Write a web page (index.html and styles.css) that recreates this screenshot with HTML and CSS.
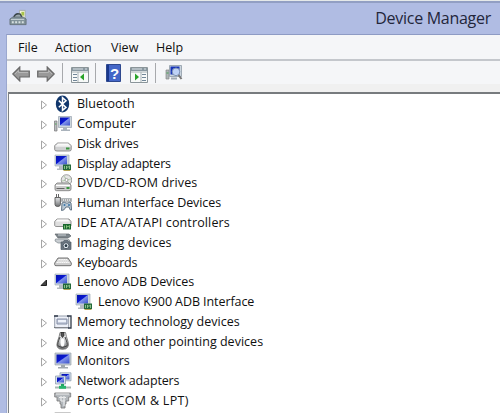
FILE: index.html
```html
<!DOCTYPE html>
<html lang="en">
<head>
<meta charset="utf-8">
<title>Device Manager</title>
<link rel="stylesheet" href="styles.css">
</head>
<body>
<svg class="defs" aria-hidden="true">
<defs>
<linearGradient id="metal" x2="0" y2="1"><stop stop-color="#fff"/><stop offset=".5" stop-color="#c5c7c9"/><stop offset="1" stop-color="#6c6e70"/></linearGradient>
<linearGradient id="screen" x2="1" y2="1"><stop stop-color="#0713ae"/><stop offset=".45" stop-color="#0918d1"/><stop offset=".52" stop-color="#8193ea"/><stop offset="1" stop-color="#3a50c9"/></linearGradient>
<symbol id="right" viewBox="0 0 8 10"><path d="M1.5 1v8L6.500 5z" fill="#fff" stroke="#a5a5a5"/></symbol>
<symbol id="open" viewBox="0 0 8 10"><path d="M6.500 2v5.500H1z" fill="#444" stroke="#222"/></symbol>
<symbol id="monitor" viewBox="0 0 18 18"><path d="M1 1h16v12H1z" fill="#c5ced5" stroke="#9ba5ad" stroke-width=".7"/><path d="M2.500 2.500h13v9h-13z" fill="url(#screen)"/><path d="M7 13h4v2h3v1.500H4V15h3z" fill="#a0a8ad"/></symbol>
<symbol id="adapter" viewBox="0 0 18 18"><path d="M1 1h14v11H1z" fill="#ccd6dd" stroke="#a0acb5" stroke-width=".7"/><path d="M2 2h11v8.500H2z" fill="url(#screen)"/><path d="M5 12h4v4H3v-1.500h2z" fill="#b4bbc0"/><path d="M9 10.500h8V16H9z" fill="#22683a"/><path d="M10.500 12v3M12.500 15v-3l1.200 1.500L15.500 12v3" stroke="#a5d69a" fill="none" stroke-width=".8"/><path d="M9.500 16.500h7" stroke="#b5a555"/></symbol>
<symbol id="bluetooth" viewBox="0 0 18 18"><ellipse cx="8.500" cy="9" rx="6.700" ry="8.500" fill="#10366c"/><path d="M4.800 5.600l7.200 6.800-3.500 3V2.700L12 5.800l-7.200 6.500" fill="none" stroke="#fff" stroke-width="1.500"/></symbol>
<symbol id="computer" viewBox="0 0 18 18"><path d="M.5 6h2.500v10H.5z" fill="#b9bcc0" stroke="#777" stroke-width=".7"/><path d="M1 9h1.500" stroke="#54a657"/><path d="M4.500 1.500h13v11h-13z" fill="#ccd6dd" stroke="#9aa4af" stroke-width=".7"/><path d="M6 2.500h10v8H6z" fill="url(#screen)"/><path d="M9 12.500h4v2h3V16H7v-1.500h2z" fill="#aab3bc"/></symbol>
<symbol id="disk" viewBox="0 0 18 18"><path d="M.7 11.500L3.700 9h10.500l3 2.500v4q0 1.500-2 1.500H3q-2.300 0-2.300-1.500z" fill="#d0d1d2" stroke="#777" stroke-width=".8"/><path d="M4 9.500h10l2 2H2z" fill="#fafafa"/><path d="M1.500 12h15" stroke="#fff"/><path d="M12 14.500h3.500" stroke="#39943e" stroke-width="2"/></symbol>
<symbol id="dvd" viewBox="0 0 18 18"><circle cx="12.500" cy="6" r="5.300" fill="#e5e5e5" stroke="#888" stroke-width=".8"/><path d="M10 2l2.500 4 3 4M8 7l9-2" stroke="#b1cda9" stroke-width=".9"/><circle cx="12.500" cy="6" r="1.500" fill="#fff" stroke="#777" stroke-width=".6"/><path d="M1 11l2-2h12l2 2v4q0 1.700-2 1.700H2.500Q1 16.700 1 15z" fill="#ccc" stroke="#777" stroke-width=".8"/><path d="M2 11.500h14" stroke="#fff"/><path d="M2.500 14.500h8" stroke="#666"/><path d="M12.500 14h3" stroke="#39943e" stroke-width="2"/></symbol>
<symbol id="hid" viewBox="0 0 18 18"><path d="M2.500 0v3m2-3v3M1 3.500h5.400v7q0 2-2.700 2T1 10.500z" fill="url(#metal)" stroke="#555" stroke-width=".9"/><path d="M7.500 4.500h10v3h-10z" fill="#d8dcde" stroke="#9ba1a5" stroke-width=".7"/><path d="M8 6h9" stroke="#777" stroke-dasharray="1 1"/><path d="M8 9l2-1 2 1h2l2-1 1 1 .6 7q-1.800 1-2.600-3h-3q-2 4-4.500 3.500z" fill="#b8c7d3" stroke="#566a7c" stroke-width=".9"/><circle cx="10.500" cy="11" r="1" fill="#3c78aa"/><circle cx="15" cy="11" r="1" fill="#3c78aa"/></symbol>
<symbol id="ide" viewBox="0 0 18 18"><path d="M.7 8.500L3 6h12l2 2.500v4q0 1-1.500 1H3q-2.300 0-2.300-1z" fill="#dedede" stroke="#777" stroke-width=".8"/><path d="M3 6.500h11l1.500 2H2z" fill="#fafafa"/><path d="M9 11h8v5.500H9z" fill="#17672e"/><path d="M10.500 12.500v3M12.500 15.500v-3l1.200 1.500 1.800-1.500v3" fill="none" stroke="#97cf87" stroke-width=".8"/></symbol>
<symbol id="camera" viewBox="0 0 18 18"><path d="M1 1h14l2 2-3 2H4z" fill="#7d858b" stroke="#5e666c" stroke-width=".7"/><path d="M4 2h8" stroke="#cdd4d8"/><path d="M1.500 6h12l2 1v3H4L1 8z" fill="#c8cdd1" stroke="#7e868c" stroke-width=".7"/><path d="M7 9h2l1-1.500h4l1 1.500h2v7.500H7z" fill="#697580" stroke="#505b65" stroke-width=".7"/><circle cx="12" cy="12.700" r="3" fill="#e5eef4" stroke="#505a64"/><circle cx="12" cy="12.700" r="1.400" fill="#253542"/></symbol>
<symbol id="keyboard" viewBox="0 0 18 18"><path d="M.7 10L4 5h10L17.300 10v1.700q0 1-1.300 1H2q-1.300 0-1.300-1z" fill="#ccc" stroke="#666" stroke-width=".9"/><path d="M4.500 6.500h9M3.500 8h11M2.500 9.500h13" stroke="#f8f8f8" stroke-dasharray="1.500 .3"/></symbol>
<symbol id="memory" viewBox="0 0 18 18"><path d="M.7 4h14v12H.7z" fill="#edf0f8" stroke="#8b93a3" stroke-width=".9"/><path d="M3 7h10v5H3z" fill="#c4cbdc" stroke="#858fa5"/><path d="M4 8h8v2H4z" fill="#eef2fa"/><path d="M.5 15.500h14" stroke="#444" stroke-dasharray="1 1"/><path d="M0 4h4m9 0h4v12h-3" fill="none" stroke="#303a49" stroke-width="1.300"/></symbol>
<symbol id="mouse" viewBox="0 0 18 18"><path d="M6 .5Q5.500 4 3.500 9.500 1 17.300 8.500 17.300t5.500-7.800Q12 4 11.500.5z" fill="url(#metal)" stroke="#666" stroke-width=".8"/><path d="M7 .5v3l1.500 2 1.500-2v-3z" fill="#555" stroke="#222" stroke-width=".7"/><path d="M6 5q-3 7-2 9 4 3 9 0 1-2-2-9" fill="none" stroke="#454545"/><ellipse cx="8.500" cy="10.500" rx="2" ry="4" fill="#fff"/></symbol>
<symbol id="network" viewBox="0 0 18 18"><path d="M6 .8h11v8H6z" fill="#d7e2ec" stroke="#8797a7" stroke-width=".7"/><path d="M7.500 2h8v5.500h-8z" fill="url(#screen)"/><path d="M1.500 4h10v8h-10z" fill="#d7e2ec" stroke="#8797a7" stroke-width=".7"/><path d="M3 5.500h7v5H3z" fill="url(#screen)"/><path d="M8.500 12v3" stroke="#20a260" stroke-width="3"/><path d="M1 15.500h16" stroke="#a6b7b1" stroke-width="2"/><path d="M5 13.800h7v3H5z" fill="#27b66c"/></symbol>
<symbol id="port" viewBox="0 0 18 18"><path d="M.7 2h16v4h-2v4H12v3h-1v4H7v-4H6v-3H3V6H.7z" fill="#b2b7bb" stroke="#777" stroke-width=".8"/><path d="M2 3h13M5 6.500h7M7 10h4" stroke="#eee"/><path d="M7 5v5m3-5v10" stroke="#e4e6e8" stroke-width="1.300"/></symbol>
</defs>
</svg>
<main class="window">
<header class="titlebar">
<svg class="app-icon" viewBox="0 0 20 18"><path d="M11 1h6v11h-6z" fill="#f4f5df" stroke="#9aa29c" stroke-width=".8"/><path d="M13 2.500h3v4h-3z" fill="#a9c44c"/><path d="M5 8q2-5 7-3l2 4" fill="#9aa7ad" stroke="#394448" stroke-width="1.500"/><path d="M1 10l3-2h11l3 2v6H1z" fill="#82939a" stroke="#5e6b72" stroke-width=".8"/><path d="M2 10.500h14" stroke="#cbd4d8"/><path d="M3 13.500h14" stroke="#d7e0df" stroke-width="2" stroke-dasharray="2 1.500"/></svg>
<h1>Device Manager</h1>
</header>
<section class="client">
<nav class="menu"><span class="file">File</span><span class="action">Action</span><span class="view">View</span><span>Help</span></nav>
<div class="toolbar">
<svg class="arrow" viewBox="0 0 18 16"><path d="M.8 8l7-7v4h9.500v6H7.800v4z" fill="#999" stroke="#696969" stroke-width="1.200"/><path d="M3 8l3.500-3.500v2H16" fill="none" stroke="#b7b7b7"/></svg>
<svg class="arrow next" viewBox="0 0 18 16"><path d="M17.200 8l-7-7v4H.7v6h9.500v4z" fill="#999" stroke="#696969" stroke-width="1.200"/><path d="M2 6.500h9.500v-2L15 8" fill="none" stroke="#b7b7b7"/></svg>
<i class="separator"></i>
<svg class="pane" viewBox="0 0 18 16"><path d="M.5.5h17v15H.5z" fill="#f8faf9" stroke="#8b9599"/><path d="M1 2.500h16" stroke="#8998a1" stroke-width="3"/><path d="M2 2h10m2 0h2" stroke="#dce2e5"/><path d="M1 5h16M7 5v10" stroke="#a9b2b6"/><path d="M2 7.500h4m-4 3h4m-4 3h4" stroke="#718698"/><path d="M13 6.500v7L9 10z" fill="#29a329"/></svg>
<i class="separator second"></i>
<svg class="help" viewBox="0 0 15 18"><path d="M.5.5h14v17H.5z" fill="#4467c8" stroke="#2e488e"/><path d="M1 1h2v16H1z" fill="#19388c"/><text x="4" y="14.500" font-family="Liberation Sans, sans-serif" font-size="15" font-weight="bold" fill="#fff">?</text></svg>
<svg class="pane action-pane" viewBox="0 0 18 16"><path d="M.5.5h17v15H.5z" fill="#f8faf9" stroke="#8b9599"/><path d="M1 2.500h16" stroke="#8998a1" stroke-width="3"/><path d="M2 2h10m2 0h2" stroke="#dce2e5"/><path d="M1 5h16M11 5v10" stroke="#a9b2b6"/><path d="M12 7.500h4m-4 3h4m-4 3h4" stroke="#718698"/><path d="M5 6.500v7l4-3.500z" fill="#29a329"/></svg>
<i class="separator third"></i>
<svg class="scan" viewBox="0 0 18 18"><path d="M1 6h3v9H1z" fill="#adb5b7" stroke="#888" stroke-width=".7"/><path d="M1.500 9h2" stroke="#43a352"/><path d="M4.500 1.500h12v11h-12z" fill="#cbd6df" stroke="#8e9ba7" stroke-width=".8"/><path d="M5.500 2.500h9v8h-9z" fill="#1734b9"/><circle cx="11" cy="7.800" r="3.800" fill="#d6e8ff" fill-opacity=".88" stroke="#7b8fb2"/><path d="M13.500 11l3 4" stroke="#777" stroke-width="2"/><path d="M6 14.500h6" stroke="#a1abb4" stroke-width="2"/></svg>
</div>
<div class="tree">
<div class="row"><svg class="toggle"><use href="#right"/></svg><svg class="icon"><use href="#bluetooth"/></svg><span class="wide">Bluetooth</span></div>
<div class="row"><svg class="toggle"><use href="#right"/></svg><svg class="icon"><use href="#computer"/></svg><span class="wide">Computer</span></div>
<div class="row"><svg class="toggle"><use href="#right"/></svg><svg class="icon"><use href="#disk"/></svg><span>Disk drives</span></div>
<div class="row"><svg class="toggle"><use href="#right"/></svg><svg class="icon"><use href="#adapter"/></svg><span class="tight">Display adapters</span></div>
<div class="row"><svg class="toggle"><use href="#right"/></svg><svg class="icon"><use href="#dvd"/></svg><span class="wider">DVD/CD-ROM drives</span></div>
<div class="row"><svg class="toggle"><use href="#right"/></svg><svg class="icon"><use href="#hid"/></svg><span class="medium">Human Interface Devices</span></div>
<div class="row"><svg class="toggle"><use href="#right"/></svg><svg class="icon"><use href="#ide"/></svg><span class="wider">IDE ATA/ATAPI controllers</span></div>
<div class="row"><svg class="toggle"><use href="#right"/></svg><svg class="icon"><use href="#camera"/></svg><span class="wider">Imaging devices</span></div>
<div class="row"><svg class="toggle"><use href="#right"/></svg><svg class="icon"><use href="#keyboard"/></svg><span>Keyboards</span></div>
<div class="row"><svg class="toggle"><use href="#open"/></svg><svg class="icon"><use href="#adapter"/></svg><span class="medium">Lenovo ADB Devices</span></div>
<div class="row child"><svg class="icon"><use href="#adapter"/></svg><span class="medium">Lenovo K900 ADB Interface</span></div>
<div class="row"><svg class="toggle"><use href="#right"/></svg><svg class="icon"><use href="#memory"/></svg><span class="wide">Memory technology devices</span></div>
<div class="row"><svg class="toggle"><use href="#right"/></svg><svg class="icon"><use href="#mouse"/></svg><span class="wide">Mice and other pointing devices</span></div>
<div class="row"><svg class="toggle"><use href="#right"/></svg><svg class="icon"><use href="#monitor"/></svg><span class="wide">Monitors</span></div>
<div class="row"><svg class="toggle"><use href="#right"/></svg><svg class="icon"><use href="#network"/></svg><span>Network adapters</span></div>
<div class="row"><svg class="toggle"><use href="#right"/></svg><svg class="icon"><use href="#port"/></svg><span class="widest">Ports (COM &amp; LPT)</span></div>
<div class="row next-device"><svg class="icon"><use href="#port"/></svg></div>
</div>
</section>
</main>
</body>
</html>
```
FILE: styles.css
```css
* { box-sizing: border-box; }
body { margin: 0; overflow: hidden; font-family: "Open Sans", "Noto Sans", sans-serif; color: #101010; }
svg { display: block; flex: none; }
.defs { width: 0; height: 0; position: absolute; }
.window { width: 500px; height: 413px; overflow: hidden; background: #b0bce3; border-top: 1px solid #e5e9e9; padding-left: 6px; }
.titlebar { height: 33px; margin-left: -6px; border-top: 2px solid #929fc3; display: flex; align-items: flex-start; padding: 6px 9px 0; }
.app-icon { width: 19px; height: 18px; }
h1 { margin: -2px 0 0 auto; font-size: 16px; line-height: 22px; font-weight: 400; letter-spacing: -.28px; color: #23263b; }
.client { height: 379px; border-left: 1px solid #9ba8cf; border-top: 1px solid #8e9bc4; background: #f0f0f0; display: flex; flex-direction: column; }
.menu { height: 26px; padding: 0 0 0 11px; background: #f5f6f8; border-bottom: 2px solid #c4c7cc; display: flex; align-items: center; font-size: 12.5px; line-height: 18px; letter-spacing: 0; }
.menu span { padding-top: 1px; }
.file { width: 37px; }
.action { width: 56px; }
.view { width: 45px; }
.toolbar { height: 23px; background: #f5f6f8; display: flex; align-items: center; padding-left: 5px; }
.arrow { width: 18px; height: 16px; margin-top: 2px; }
.next { margin-left: 7px; }
.separator { width: 1px; height: 20px; background: #a7a9ac; margin: 1px 9px 0 7px; }
.second { margin-left: 6px; margin-right: 10px; }
.third { margin-left: 7px; margin-right: 9px; }
.pane { width: 18px; height: 16px; margin-top: 5px; }
.help { width: 15px; height: 18px; }
.action-pane { margin-left: 9px; }
.separator + .pane { margin-left: -1px; }
.scan { width: 18px; height: 18px; }
.tree { height: 321px; margin-top: 8px; margin-left: 1px; border-left: 1px solid #7d8185; border-top: 2px solid #777b7e; background: #fff; overflow: hidden; font-size: 12.5px; letter-spacing: -.15px; }
.row { height: 19.77px; display: flex; align-items: center; padding-left: 31px; line-height: 18px; white-space: nowrap; }
.row span { padding-top: 1px; }
.tight { letter-spacing: -.21px; }
.medium { letter-spacing: -.08px; }
.wide { letter-spacing: .02px; }
.wider { letter-spacing: .13px; }
.widest { letter-spacing: .3px; }
.toggle { width: 8px; height: 10px; margin: 3px 6px 0 0; }
.icon { width: 18px; height: 18px; margin-right: 5px; }
.child { padding-left: 66px; }
.next-device { padding-left: 45px; }
```
